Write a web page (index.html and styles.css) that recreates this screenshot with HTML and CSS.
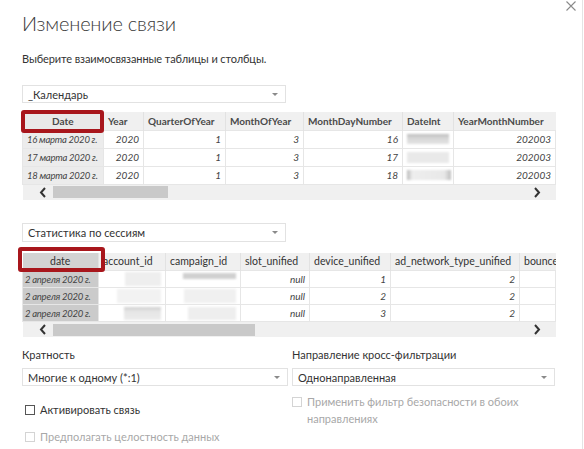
FILE: index.html
```html
<!DOCTYPE html>
<html lang="ru">
<head>
<meta charset="utf-8">
<title>Изменение связи</title>
<link rel="stylesheet" href="styles.css">
</head>
<body>
<div class="dialog">
  <button class="close" aria-label="Закрыть">
    <svg width="10" height="10" viewBox="0 0 10 10"><path d="M0.5 0.5 L9.5 9.5 M9.5 0.5 L0.5 9.5" stroke="#8a8a8a" stroke-width="1.1" fill="none"/></svg>
  </button>
  <h1 class="title">Изменение связи</h1>
  <p class="subtitle">Выберите взаимосвязанные таблицы и столбцы.</p>

  <div class="select sel-table1"><span>_Календарь</span><span class="caret"></span></div>
  <div class="grid-wrap gw1">
    <table class="grid g1">
      <colgroup>
        <col class="w81"><col class="w40"><col class="w82"><col class="w78"><col class="w99"><col class="w51"><col class="w102">
      </colgroup>
      <thead>
        <tr><th class="key">Date</th><th>Year</th><th>QuarterOfYear</th><th>MonthOfYear</th><th>MonthDayNumber</th><th>DateInt</th><th>YearMonthNumber</th></tr>
      </thead>
      <tbody>
        <tr><td class="key">16 марта 2020 г.</td><td>2020</td><td>1</td><td>3</td><td>16</td><td><span class="blur b-top"></span></td><td>202003</td></tr>
        <tr><td class="key">17 марта 2020 г.</td><td>2020</td><td>1</td><td>3</td><td>17</td><td><span class="blur b-soft"></span></td><td>202003</td></tr>
        <tr><td class="key">18 марта 2020 г.</td><td>2020</td><td>1</td><td>3</td><td>18</td><td><span class="blur b-ends"></span></td><td>202003</td></tr>
      </tbody>
      <tfoot>
        <tr><td colspan="7" class="scroll">
          <div class="scrollbar">
            <svg class="chev" width="8" height="11" viewBox="0 0 8 11"><path d="M6 1 L2 5.5 L6 10" stroke="#333" stroke-width="2" fill="none"/></svg>
            <span class="thumb t1"></span>
            <span class="spacer"></span>
            <svg class="chev" width="8" height="11" viewBox="0 0 8 11"><path d="M2 1 L6 5.5 L2 10" stroke="#333" stroke-width="2" fill="none"/></svg>
          </div>
        </td></tr>
      </tfoot>
    </table>
    <div class="highlight hl1"></div>
  </div>

  <div class="select sel-table2"><span>Статистика по сессиям</span><span class="caret"></span></div>
  <div class="grid-wrap gw2">
    <table class="grid g2">
      <colgroup>
        <col class="w76"><col class="w67"><col class="w75"><col class="w69"><col class="w81"><col class="w129"><col class="w36">
      </colgroup>
      <thead>
        <tr><th class="key">date</th><th>account_id</th><th>campaign_id</th><th>slot_unified</th><th>device_unified</th><th>ad_network_type_unified</th><th>bounces</th></tr>
      </thead>
      <tbody>
        <tr><td class="key">2 апреля 2020 г.</td><td><span class="blur a1"></span></td><td><span class="blur c1"></span></td><td>null</td><td>1</td><td>2</td><td></td></tr>
        <tr><td class="key">2 апреля 2020 г.</td><td><span class="blur a2"></span></td><td><span class="blur c2"></span></td><td>null</td><td>2</td><td>2</td><td></td></tr>
        <tr><td class="key">2 апреля 2020 г.</td><td><span class="blur a3"></span></td><td><span class="blur c3"></span></td><td>null</td><td>3</td><td>2</td><td></td></tr>
      </tbody>
      <tfoot>
        <tr><td colspan="7" class="scroll">
          <div class="scrollbar">
            <svg class="chev" width="8" height="11" viewBox="0 0 8 11"><path d="M6 1 L2 5.5 L6 10" stroke="#333" stroke-width="2" fill="none"/></svg>
            <span class="thumb t2"></span>
            <span class="spacer"></span>
            <svg class="chev" width="8" height="11" viewBox="0 0 8 11"><path d="M2 1 L6 5.5 L2 10" stroke="#333" stroke-width="2" fill="none"/></svg>
          </div>
        </td></tr>
      </tfoot>
    </table>
    <div class="highlight hl2"></div>
  </div>

  <div class="options">
    <div class="opt-col left">
      <div class="label">Кратность</div>
      <div class="select"><span>Многие к одному (*:1)</span><span class="caret"></span></div>
      <div class="check active"><span class="box"></span><span>Активировать связь</span></div>
      <div class="check disabled integ"><span class="box"></span><span>Предполагать целостность данных</span></div>
    </div>
    <div class="opt-col right">
      <div class="label">Направление кросс-фильтрации</div>
      <div class="select"><span>Однонаправленная</span><span class="caret"></span></div>
      <div class="check disabled multi"><span class="box"></span><span>Применить фильтр безопасности в обоих направлениях</span></div>
    </div>
  </div>
</div>
</body>
</html>
```
FILE: styles.css
```css
* { box-sizing: border-box; }
body {
  margin: 0;
  background: #fff;
  font-family: "Lato", "Open Sans", "Noto Sans", sans-serif;
  color: #333;
}
.dialog {
  position: relative;
  width: 583px;
  height: 449px;
  border-right: 1px solid #e4e4e4;
  padding: 9px 0 0 22px;
  overflow: hidden;
}
.close {
  position: absolute;
  top: 1px;
  left: 566px;
  width: 10px;
  height: 10px;
  padding: 0;
  border: 0;
  background: none;
  line-height: 0;
}
.title {
  margin: 0;
  font-size: 20px;
  font-weight: 300;
  line-height: 28px;
  color: #3a3a3a;
  letter-spacing: -0.2px;
}
.subtitle {
  margin: 15px 0 0;
  font-size: 11px;
  line-height: 14px;
  color: #333;
  letter-spacing: -0.1px;
}
.select {
  display: flex;
  align-items: center;
  justify-content: space-between;
  height: 18px;
  border: 1px solid #e2e2e2;
  padding: 0 7px 0 5px;
  font-size: 11px;
  color: #333;
  background: #fff;
}
.caret {
  width: 0;
  height: 0;
  border-left: 3px solid transparent;
  border-right: 3px solid transparent;
  border-top: 3px solid #8a8a8a;
}
.sel-table1 { width: 264px; margin-top: 19px; }
.sel-table2 { width: 264px; margin-top: 23px; height: 19px; }

.grid-wrap { position: relative; width: 533px; }
.gw1 { margin-top: 9px; }
.gw2 { margin-top: 11px; }

.grid {
  width: 533px;
  border-collapse: collapse;
  table-layout: fixed;
  font-size: 10px;
  color: #444;
}
.w81 { width: 81px; } .w40 { width: 40px; } .w82 { width: 82px; } .w78 { width: 78px; }
.w99 { width: 99px; } .w51 { width: 51px; } .w102 { width: 102px; }
.w76 { width: 76px; } .w67 { width: 67px; } .w75 { width: 75px; } .w69 { width: 69px; }
.w129 { width: 129px; } .w36 { width: 36px; }

.grid th {
  height: 18px;
  padding: 0 4px;
  background: #f0f0f0;
  border-left: 1px solid #e2e2e2;
  text-align: left;
  white-space: nowrap;
  overflow: hidden;
  font-weight: 700;
  color: #4a4a4a;
}
.g2 th {
  font-weight: 400;
  font-size: 10.5px;
  height: 18px;
  color: #333;
}
.grid th:first-child { border-left: 0; }
.grid th.key { text-align: center; background: #e9e9e9; }
.g2 th.key { background: #d3d3d3; }

.grid td {
  height: 18px;
  padding: 0 4px;
  border: 1px solid #e6e6e6;
  text-align: right;
  font-style: italic;
  white-space: nowrap;
  overflow: hidden;
  color: #444;
}
.g2 tbody td { height: 17px; }
.grid td.key {
  text-align: left;
  background: #ececec;
  padding: 0 0 0 4px;
  font-size: 9.5px;
  letter-spacing: -0.25px;
}
.g2 td.key { background: #cbcbcb; padding-left: 2px; }

.grid td.scroll {
  height: 15px;
  padding: 0;
  background: #f0f0f0;
  border: 0;
}
.scrollbar {
  display: flex;
  align-items: center;
  height: 15px;
  padding: 0 15px 0 16px;
}
.chev { flex: none; }
.thumb { height: 12px; background: #c9c9c9; margin-left: 6px; }
.t1 { width: 115px; }
.t2 { width: 202px; }
.spacer { flex: 1; }

.blur {
  display: block;
  margin-left: auto;
  filter: blur(1px);
}
.b-top { width: 42px; height: 10px; background: linear-gradient(#bdbdbd 0, #d6d6d6 40%, #e4e4e4 100%); }
.b-soft { width: 42px; height: 11px; background: #e9e9e9; }
.b-ends { width: 44px; height: 10px; background: linear-gradient(90deg, #b8b8b8 0, #eee 12%, #e8e8e8 85%, #bdbdbd 100%); }
.a1 { width: 36px; height: 14px; background: #eeeeee; }
.a2 { width: 44px; height: 14px; background: #f2f2f2; }
.a3 { width: 37px; height: 13px; background: linear-gradient(#cfcfcf 0, #e6e6e6 35%, #ececec 100%); }
.c1 { width: 53px; height: 6px; background: #d0d0d0; margin-bottom: 6px; }
.c2 { width: 52px; height: 14px; background: #f0f0f0; }
.c3 { width: 48px; height: 13px; background: #eeeeee; }

.highlight {
  position: absolute;
  border: 4px solid #a8161c;
  border-radius: 3px;
  pointer-events: none;
}
.hl1 { left: -1px; top: -2px; width: 83px; height: 23px; }
.hl2 { left: -4px; top: -6px; width: 87px; height: 25px; }

.options {
  display: flex;
  gap: 4px;
  margin-top: 11px;
}
.opt-col { display: flex; flex-direction: column; }
.opt-col.left { width: 266px; }
.opt-col.right { width: 263px; }
.label {
  font-size: 11px;
  line-height: 14px;
  color: #333;
}
.opt-col .select { margin-top: 6px; height: 18px; }
.check {
  display: flex;
  align-items: flex-start;
  gap: 5px;
  font-size: 11px;
  line-height: 17px;
  color: #333;
}
.check .box {
  flex: none;
  width: 10px;
  height: 10px;
  margin-top: 4px;
  border: 1.5px solid #555;
  background: #fff;
}
.check.disabled { color: #a8a8a8; }
.check.disabled .box { border: 1px solid #d4d4d4; }
.check.active { margin: 15px 0 0 3px; }
.check.integ { margin: 10px 0 0 3px; }
.check.multi { margin-top: 7px; }
```
